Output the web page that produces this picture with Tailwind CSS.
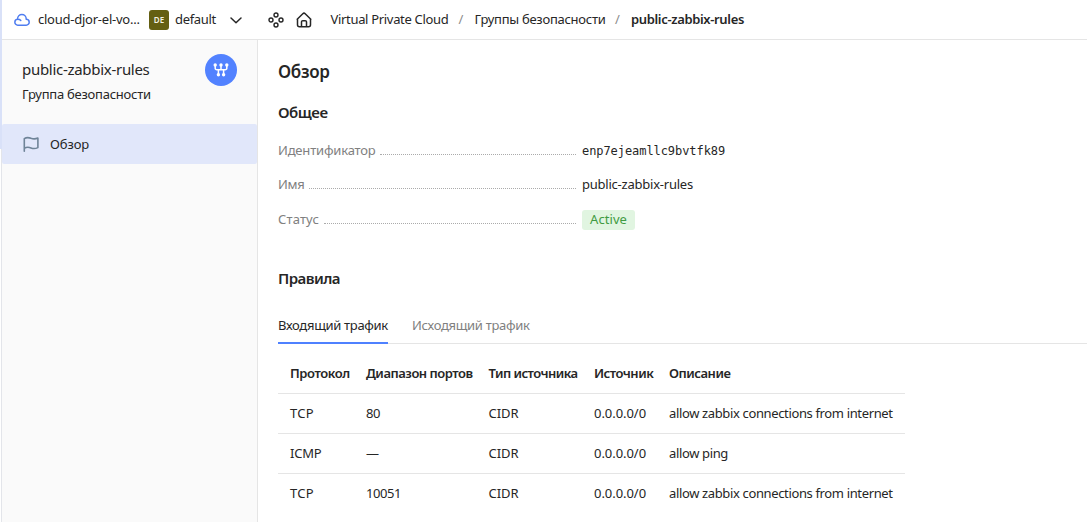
<!DOCTYPE html>
<html lang="ru">
<head>
<meta charset="utf-8">
<title>public-zabbix-rules</title>
<script src="https://cdn.jsdelivr.net/npm/@tailwindcss/browser@4"></script>
</head>
<body class="flex h-[522px] w-[1087px] overflow-hidden bg-white font-['Noto_Sans',sans-serif] text-[13px] leading-5 text-[#262626]">
  <div class="w-[2px] shrink-0 border-r border-[#e3e5ea]">
    <div class="h-[149px] w-[2px] bg-[#d9e1f8]"></div>
  </div>
  <div class="flex min-w-0 flex-1 flex-col">
    <header class="flex h-10 shrink-0 items-center border-b border-[#e5e5e5] pl-3 whitespace-nowrap">
      <svg class="mr-2 size-4" viewBox="0 0 16 16" fill="none" stroke="#4f7df0" stroke-width="1.5" stroke-linejoin="round" stroke-linecap="round"><path d="M3.6 7.300V6.700A4.300 4.300 0 0 1 12.200 6.700v.5a3 3 0 0 1 0 6H3.800a2.950 2.950 0 0 1 0-5.900c1.300 0 2.300.4 3 1.200"/></svg>
      <span class="w-[111px] pb-px tracking-[-0.24px]">cloud-djor-el-vo...</span>
      <span class="mr-[6px] flex size-5 items-center justify-center rounded-[3px] bg-[#645f12] text-[8px] leading-none font-semibold text-[#f3f2e4]">DE</span>
      <span class="w-[53px] pb-px tracking-[-0.31px]">default</span>
      <svg class="mr-[24px] size-4" viewBox="0 0 16 16" fill="none" stroke="#262626" stroke-width="1.5" stroke-linecap="round" stroke-linejoin="round"><path d="M3 6l5 4.8L13 6"/></svg>
      <svg class="mr-3 size-4" viewBox="0 0 16 16" fill="none" stroke="#262626" stroke-width="1.4"><circle cx="8" cy="3" r="2"/><circle cx="3" cy="8" r="2"/><circle cx="13" cy="8" r="2"/><circle cx="8" cy="13" r="2"/></svg>
      <svg class="mr-[18.5px] size-4" viewBox="0 0 16 16" fill="none" stroke="#262626" stroke-width="1.5" stroke-linejoin="round" stroke-linecap="round"><path d="M1.200 7.200L6.800 1.700a1.700 1.700 0 0 1 2.400 0L14.800 7.200M1.500 7v5.800a2 2 0 0 0 2 2h9a2 2 0 0 0 2-2V7M5.500 14.600V10a1.300 1.300 0 0 1 1.300-1.300h2.400a1.300 1.300 0 0 1 1.300 1.300v4.600"/></svg>
      <span class="w-[128px] pb-px tracking-[-0.32px]">Virtual Private Cloud</span>
      <span class="w-4 pb-px text-[#8c8c8c]">/</span>
      <span class="w-[140.5px] pb-px tracking-[-0.27px]">Группы безопасности</span>
      <span class="w-4 pb-px text-[#8c8c8c]">/</span>
      <span class="pb-px font-semibold tracking-[-0.345px]">public-zabbix-rules</span>
    </header>
    <div class="flex min-h-0 flex-1">
      <aside class="w-[256px] shrink-0 border-r border-[#e5e5e5] bg-[#fafafa]">
        <div class="flex h-[84px] justify-between pt-[14px] pr-5 pl-5">
          <div>
            <div class="mt-[5px] text-[15px] leading-5 tracking-[-0.29px]">public-zabbix-rules</div>
            <div class="mt-[5px] tracking-[-0.24px]">Группа безопасности</div>
          </div>
          <div class="flex size-8 items-center justify-center rounded-full bg-[#5282ff]">
            <svg class="size-4" viewBox="0 0 16 16" fill="none" stroke="#fff" stroke-width="1.5"><path d="M2.200 3v3.200a1.600 1.600 0 0 0 1.600 1.600h8.400a1.600 1.600 0 0 0 1.600-1.600V3M8 3v4.800M5.400 7.800v4.600M10.600 7.800v4.600"/><g fill="#fff" stroke="none"><circle cx="2.200" cy="3" r="1.700"/><circle cx="8" cy="3" r="1.700"/><circle cx="13.800" cy="3" r="1.700"/><circle cx="5.400" cy="12.700" r="1.700"/><circle cx="10.600" cy="12.700" r="1.700"/></g></svg>
          </div>
        </div>
        <div class="flex h-10 items-center rounded-[2px] bg-[#e1e7fa] pl-[21px]">
          <svg class="mr-[11px] size-4" viewBox="0 0 16 16" fill="none" stroke="#6f8498" stroke-width="1.6" stroke-linecap="round" stroke-linejoin="round"><path d="M1.300 15.200V2.600C3.200 1.400 5.600 1.300 8 2.300c2.400.9 4.500.9 6.900-.3v9.600c-2.400 1.200-4.500 1.300-6.900.3-2.400-.9-4.800-.8-6.700.5"/></svg>
          <span class="tracking-[-0.12px]">Обзор</span>
        </div>
      </aside>
      <main class="min-w-0 flex-1 pl-5">
        <h1 class="mt-5 h-6 text-[17px] leading-6 font-semibold tracking-[-0.33px]">Обзор</h1>
        <h2 class="mt-[18px] h-5 text-[15px] leading-5 font-semibold tracking-[-0.48px]">Общее</h2>
        <dl class="mt-[18px] w-[600px]">
          <div class="flex h-5">
            <dt class="flex w-[298px] text-[#808080]"><span class="mr-1 tracking-[-0.18px]">Идентификатор</span><span class="h-[15px] flex-1 border-b border-dotted border-[#ababab]"></span></dt>
            <dd class="mt-px ml-[6px] font-['DejaVu_Sans_Mono',monospace] text-[12px] tracking-[-0.07px]">enp7ejeamllc9bvtfk89</dd>
          </div>
          <div class="mt-[14px] flex h-5">
            <dt class="flex w-[298px] text-[#808080]"><span class="mr-[5px] tracking-[-0.28px]">Имя</span><span class="h-[15px] flex-1 border-b border-dotted border-[#ababab]"></span></dt>
            <dd class="ml-[6px] tracking-[-0.23px]">public-zabbix-rules</dd>
          </div>
          <div class="mt-[15px] flex h-5">
            <dt class="flex w-[298px] text-[#808080]"><span class="mr-[5px] tracking-[0.14px]">Статус</span><span class="h-[15px] flex-1 border-b border-dotted border-[#ababab]"></span></dt>
            <dd class="mt-px ml-[6px] h-5 rounded-[3px] bg-[#e1f5e1] px-2 leading-[18px] tracking-[0.08px] text-[#3f9b42]">Active</dd>
          </div>
        </dl>
        <h2 class="mt-[39px] h-5 text-[15px] leading-5 font-semibold tracking-[-0.54px]">Правила</h2>
        <div class="mt-4 flex h-10 gap-6 border-b border-[#e5e5e5]">
          <div class="h-10 w-[110px] border-b-2 border-[#4f81ff] pt-[11px] tracking-[-0.31px] whitespace-nowrap">Входящий трафик</div>
          <div class="pt-[11px] tracking-[-0.31px] text-[#808080]">Исходящий трафик</div>
        </div>
        <div class="mt-[10px] w-[627px] whitespace-nowrap *:grid *:h-10 *:grid-cols-[76px_122.500px_105.500px_75px_1fr] *:items-center *:border-b *:pb-px *:pl-3">
          <div class="border-[#e5e5e5] font-semibold"><span class="tracking-[-0.42px]">Протокол</span><span class="tracking-[-0.48px]">Диапазон портов</span><span class="tracking-[-0.54px]">Тип источника</span><span class="tracking-[-0.5px]">Источник</span><span class="tracking-[-0.48px]">Описание</span></div>
          <div class="border-[#e5e5e5]"><span class="tracking-[0.3px]">TCP</span><span class="tracking-[-0.43px]">80</span><span class="tracking-[-0.05px]">CIDR</span><span class="tracking-[-0.05px]">0.0.0.0/0</span><span class="tracking-[-0.36px]">allow zabbix connections from internet</span></div>
          <div class="border-[#e5e5e5]"><span class="tracking-[-0.2px]">ICMP</span><span>—</span><span class="tracking-[-0.05px]">CIDR</span><span class="tracking-[-0.05px]">0.0.0.0/0</span><span class="tracking-[-0.36px]">allow ping</span></div>
          <div class="border-transparent"><span class="tracking-[0.3px]">TCP</span><span class="tracking-[-0.43px]">10051</span><span class="tracking-[-0.05px]">CIDR</span><span class="tracking-[-0.05px]">0.0.0.0/0</span><span class="tracking-[-0.36px]">allow zabbix connections from internet</span></div>
        </div>
      </main>
    </div>
  </div>
</body>
</html>
